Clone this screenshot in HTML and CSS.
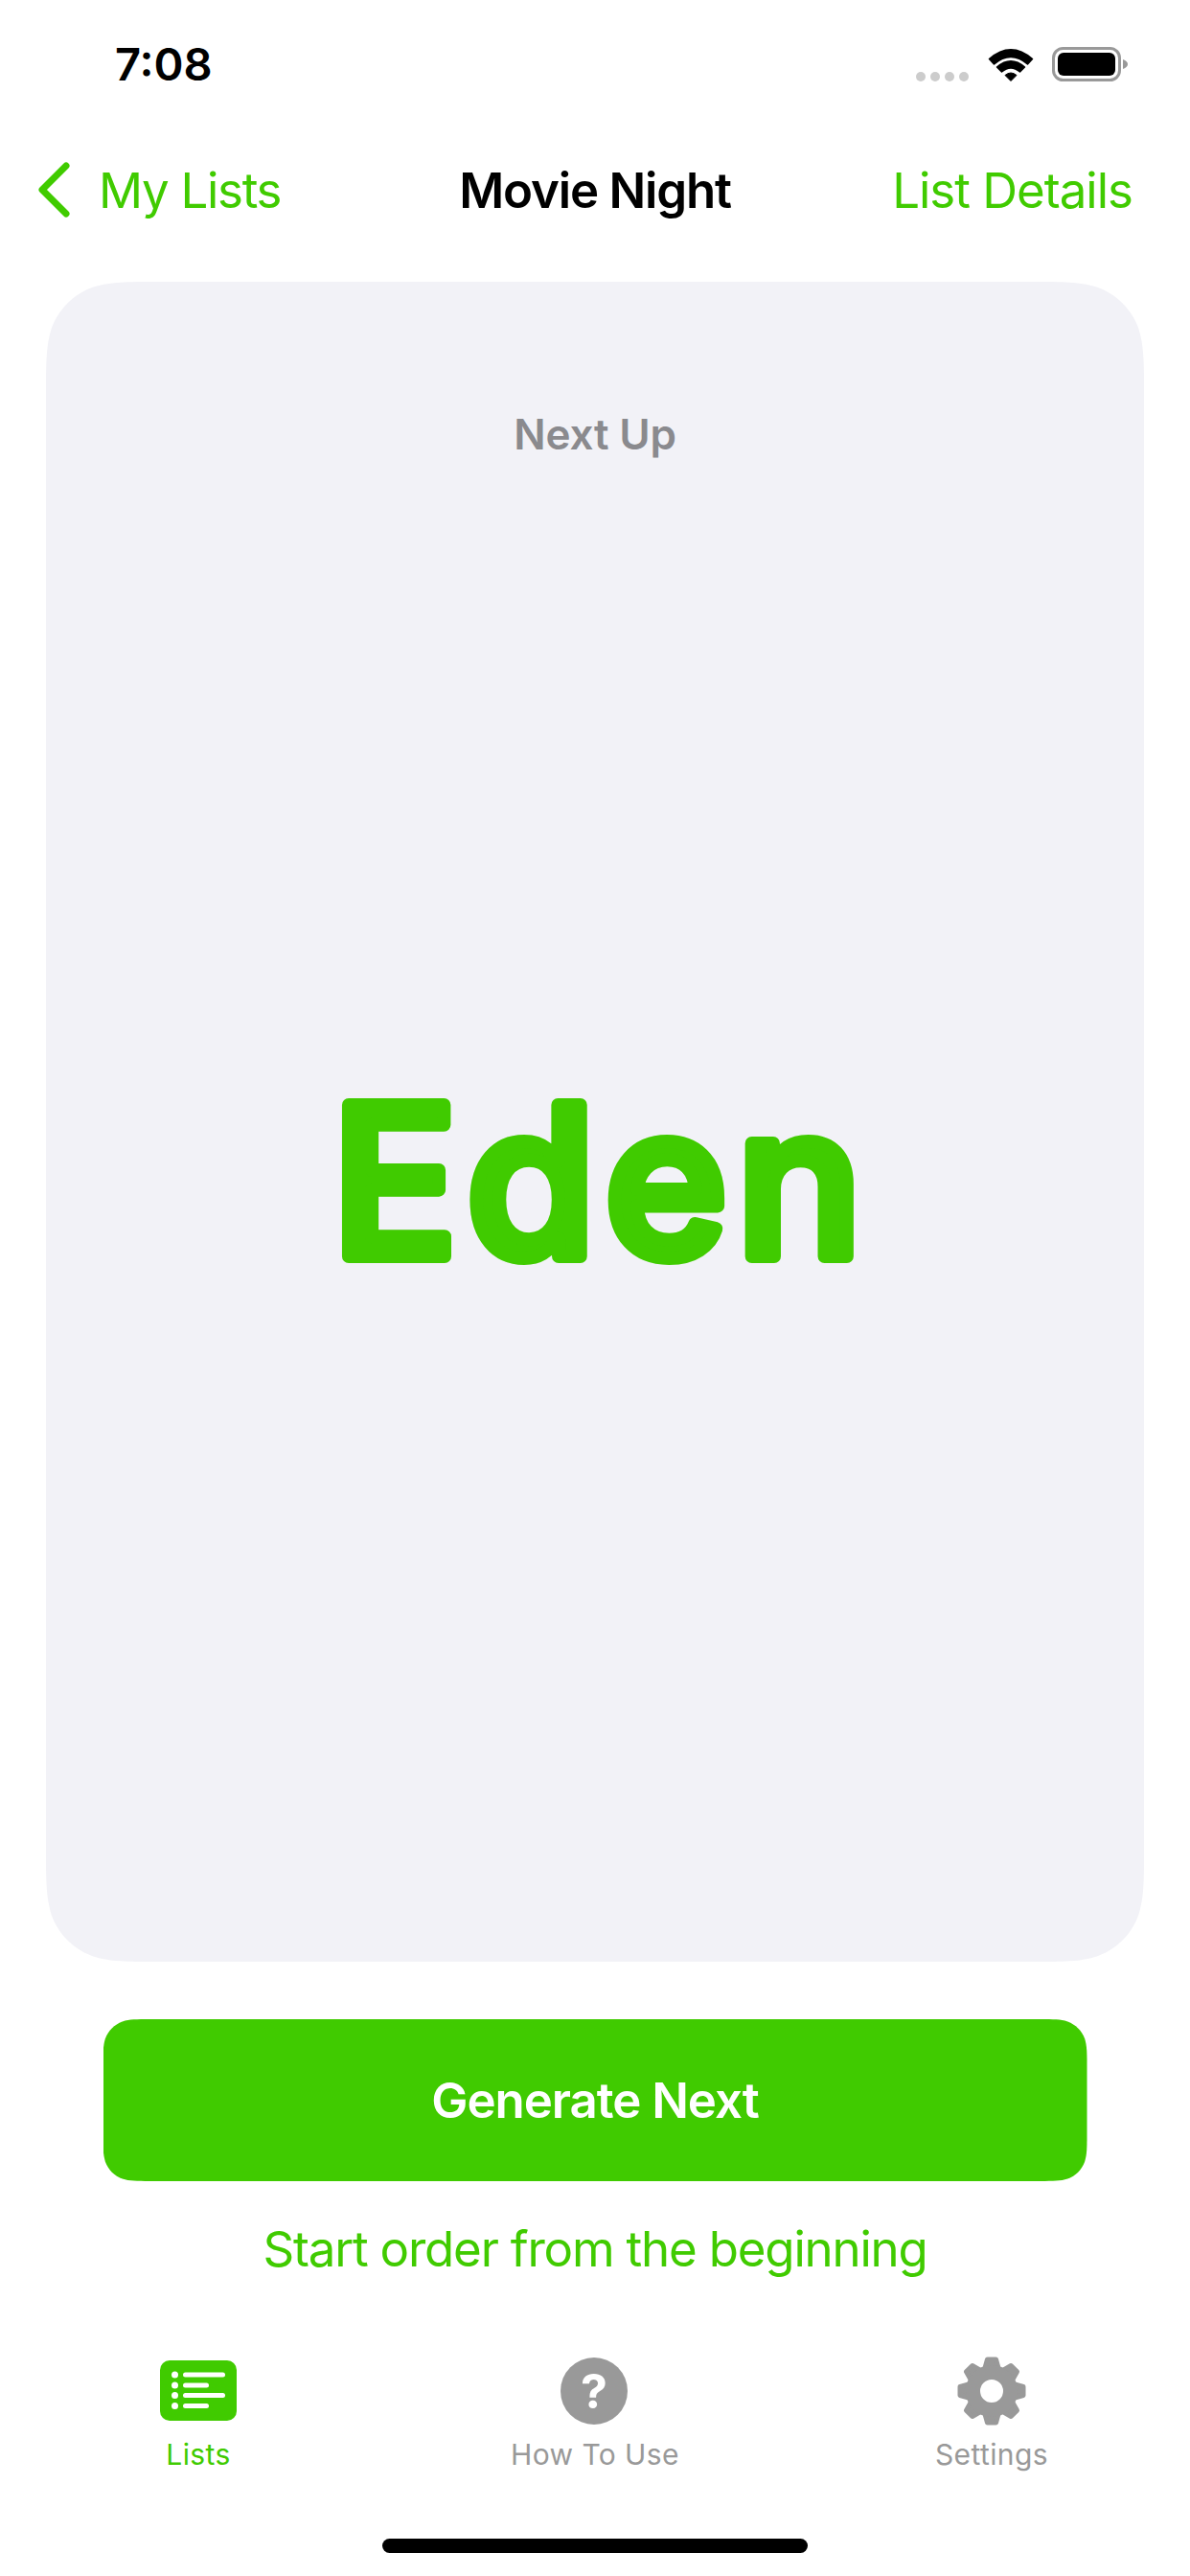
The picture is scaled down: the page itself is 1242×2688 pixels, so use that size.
FILE: index.html
```html
<!DOCTYPE html>
<html lang="en">
<head>
<meta charset="utf-8">
<title>Movie Night</title>
<link rel="stylesheet" href="styles.css">
</head>
<body>
<div class="phone">
  <header class="status">
    <span class="time">7:08</span>
    <div class="status-icons">
      <div class="signal"><i></i><i></i><i></i><i></i></div>
      <svg class="wifi" viewBox="0 0 48 36" width="48" height="36">
        <path d="M1.5 12.5 Q24 -7 46.5 12.5 L41.5 18 Q24 3 6.5 18 Z" fill="#000" stroke="#000" stroke-width="1.5" stroke-linejoin="round"/>
        <path d="M9.5 21 Q24 8.500 38.500 21 L33.500 26 Q24 18 14.500 26 Z" fill="#000" stroke="#000" stroke-width="1.500" stroke-linejoin="round"/>
        <path d="M18 29.500 Q24 24.500 30 29.500 L24 35.500 Z" fill="#000" stroke="#000" stroke-width="1" stroke-linejoin="round"/>
      </svg>
      <svg class="battery" viewBox="0 0 80 36" width="80" height="36">
        <rect x="1.500" y="1.500" width="69" height="33" rx="10" fill="none" stroke="#999" stroke-width="3"/>
        <rect x="6" y="6" width="60" height="24" rx="6" fill="#000"/>
        <path d="M74 13 Q79 15 79 18 Q79 21 74 23 Z" fill="#999"/>
      </svg>
    </div>
  </header>

  <nav class="nav">
    <a class="back">
      <svg class="chevron" viewBox="0 0 36 60" width="36" height="60">
        <path d="M32 5 L7 30 L32 55" fill="none" stroke="#40cb00" stroke-width="7" stroke-linecap="round" stroke-linejoin="round"/>
      </svg>
      <span>My Lists</span>
    </a>
    <h1 class="title">Movie Night</h1>
    <a class="details">List Details</a>
  </nav>

  <main class="content">
    <section class="card">
      <p class="next-up">Next Up</p>
      <svg class="name" viewBox="0 0 1146 300" width="1146" height="300">
        <text class="name-text" x="580" y="251" text-anchor="middle">Eden</text>
      </svg>
    </section>
    <button class="generate">Generate Next</button>
    <a class="restart">Start order from the beginning</a>
  </main>

  <footer class="tabs">
    <div class="tab tab-active">
      <svg class="tab-icon" viewBox="0 0 80 72" width="80" height="72">
        <rect x="0" y="4" width="80" height="63" rx="10" fill="#40cb00"/>
        <g fill="#fff">
          <circle cx="15.500" cy="19" r="3.500"/><circle cx="15.500" cy="30" r="3.500"/>
          <circle cx="15.500" cy="40.500" r="3.500"/><circle cx="15.500" cy="51.500" r="3.500"/>
          <rect x="24" y="16.500" width="44" height="5" rx="2.500"/>
          <rect x="24" y="27.500" width="27" height="5" rx="2.500"/>
          <rect x="24" y="38" width="44" height="5" rx="2.500"/>
          <rect x="24" y="49" width="27" height="5" rx="2.500"/>
        </g>
      </svg>
      <span class="tab-label">Lists</span>
    </div>
    <div class="tab">
      <div class="help-icon">?</div>
      <span class="tab-label">How To Use</span>
    </div>
    <div class="tab">
      <svg class="tab-icon" viewBox="-36 -36 72 72" width="72" height="72">
        <g fill="#999" stroke="#999" stroke-width="5" stroke-linejoin="round">
          <path id="tooth" d="M-7 -24 L-4.500 -33 L4.500 -33 L7 -24 Z"/>
          <use href="#tooth" transform="rotate(45)"/>
          <use href="#tooth" transform="rotate(90)"/>
          <use href="#tooth" transform="rotate(135)"/>
          <use href="#tooth" transform="rotate(180)"/>
          <use href="#tooth" transform="rotate(225)"/>
          <use href="#tooth" transform="rotate(270)"/>
          <use href="#tooth" transform="rotate(315)"/>
        </g>
        <circle r="19.500" fill="none" stroke="#999" stroke-width="15"/>
      </svg>
      <span class="tab-label">Settings</span>
    </div>
  </footer>
  <div class="home-wrap"><div class="home"></div></div>
</div>
</body>
</html>
```
FILE: styles.css
```css
* { box-sizing: border-box; margin: 0; padding: 0; }
html, body { width: 1242px; height: 2688px; background: #fff; overflow: hidden; }
body { font-family: Inter, "Liberation Sans", sans-serif; color: #000; }
.phone { width: 1242px; height: 2688px; display: flex; flex-direction: column; }

.status { height: 132px; padding: 49px 64px 0 120px; display: flex; justify-content: space-between; align-items: flex-start; }
.time { font-size: 47px; line-height: 36px; font-weight: 600; }
.status-icons { display: flex; align-items: flex-end; }
.signal { display: flex; gap: 5px; margin-right: 20px; }
.signal i { width: 10px; height: 10px; border-radius: 50%; background: #ccc; }
.wifi { margin-right: 19px; }

.nav { height: 132px; display: grid; grid-template-columns: 1fr auto 1fr; align-items: center; padding: 0 60px; font-size: 51px; letter-spacing: -1.3px; }
.back { display: flex; align-items: center; gap: 30px; margin-left: -23px; color: #40cb00; }
.chevron { margin-top: -1px; }
.title { font-size: 51px; font-weight: 600; letter-spacing: -1.2px; }
.details { text-align: right; letter-spacing: -1px; color: #40cb00; }

.content { flex: 1; display: flex; flex-direction: column; align-items: center; padding-top: 30px; }
.card { width: 1146px; height: 1753px; background: #f2f2f7; display: flex; flex-direction: column; align-items: center;
  clip-path: path("M0 117.7 C0 83.8 0 66.9 5.8 48.6 C13 28.7 28.7 13 48.6 5.8 C66.9 0 83.8 0 117.7 0 L1028.3 0 C1062.2 0 1079.1 0 1097.4 5.8 C1117.3 13 1133 28.7 1140.2 48.6 C1146 66.9 1146 83.8 1146 117.7 L1146 1635.3 C1146 1669.2 1146 1686.1 1140.2 1704.4 C1133 1724.3 1117.3 1740 1097.4 1747.2 C1079.1 1753 1062.2 1753 1028.3 1753 L117.7 1753 C83.8 1753 66.9 1753 48.6 1747.2 C28.7 1740 13 1724.3 5.8 1704.4 C0 1686.1 0 1669.2 0 1635.3 Z"); }
.next-up { margin-top: 132px; font-size: 44px; line-height: 54px; font-weight: 600; letter-spacing: -0.2px; color: #8a8a8e; }
.name { display: block; margin-top: 580px; flex: none; overflow: visible; }
.name-text { font-size: 217px; font-weight: 500; letter-spacing: 10px; fill: #40cb00; stroke: #40cb00; stroke-width: 14px; stroke-linejoin: round; }
.generate { margin-top: 60px; width: 1027px; height: 169px; border: 0; background: #40cb00; color: #fff; font: 600 51px Inter, "Liberation Sans", sans-serif; letter-spacing: -1.05px;
  clip-path: path("M0 48.9 C0 34.8 0 27.8 2.4 20.2 C5.4 11.9 11.9 5.4 20.2 2.4 C27.8 0 34.8 0 48.9 0 L978.1 0 C992.2 0 999.2 0 1006.8 2.4 C1015.1 5.4 1021.6 11.9 1024.6 20.2 C1027 27.8 1027 34.8 1027 48.9 L1027 120.1 C1027 134.2 1027 141.2 1024.6 148.8 C1021.6 157.1 1015.1 163.6 1006.8 166.6 C999.2 169 992.2 169 978.1 169 L48.9 169 C34.8 169 27.8 169 20.2 166.6 C11.9 163.6 5.4 157.1 2.4 148.8 C0 141.2 0 134.2 0 120.1 Z"); }
.restart { margin-top: 40px; font-size: 51px; line-height: 62px; letter-spacing: -1.2px; color: #40cb00; }

.tabs { display: grid; grid-template-columns: repeat(3, 414px); height: 147px; }
.tab { display: flex; flex-direction: column; align-items: center; color: #999; }
.tab-active { color: #40cb00; }
.tab-icon { display: block; margin-top: 20px; }
.help-icon { margin: 21px 0 1px -2px; width: 70px; height: 70px; border-radius: 50%; background: #999; color: #fff; font-size: 50px; line-height: 70px; font-weight: 700; text-align: center; }
.tab-label { margin-top: 12px; font-size: 30px; line-height: 36px; font-weight: 400; letter-spacing: 0.4px; }

.home-wrap { height: 102px; display: flex; justify-content: center; padding-top: 63px; }
.home { width: 444px; height: 15px; border-radius: 8px; background: #000; }
```
